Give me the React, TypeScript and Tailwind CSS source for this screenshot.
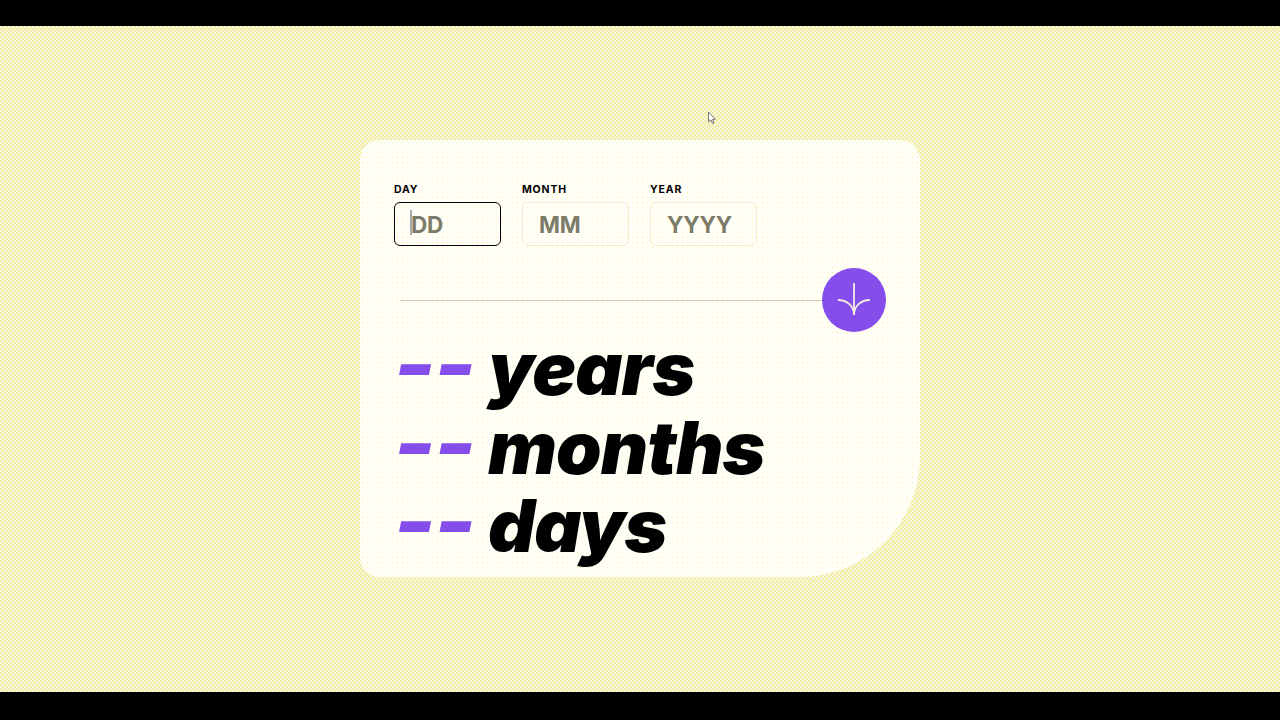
export default function App() {
  const fields = [
    { label: "DAY", placeholder: "DD", focused: true },
    { label: "MONTH", placeholder: "MM", focused: false },
    { label: "YEAR", placeholder: "YYYY", focused: false },
  ];
  const results = ["years", "months", "days"];

  return (
    <div className="relative flex h-[720px] flex-col bg-black pt-[26px] pb-[28px] font-['Inter',sans-serif]">
      <main className="flex flex-1 items-start justify-center pt-[114px] bg-[#f4f0bc] bg-[conic-gradient(#f3ed9f_25%,#f6f5de_0_50%,#f3ed9f_0_75%,#f6f5de_0)] bg-[length:4px_4px]">
        <div className="h-[437px] w-[560px] overflow-hidden rounded-t-[20px] rounded-bl-[20px] rounded-br-[120px] bg-[#fffff8] bg-[radial-gradient(#f9f5a4_0.6px,transparent_0.7px)] bg-[length:5px_5px] pt-[43px] pl-[34px] pr-[34px]">
          <div className="flex gap-[21px]">
            {fields.map((f) => (
              <label key={f.label} className="relative flex w-[107px] flex-col">
                <span className="mb-[5px] text-[10.5px] leading-[14px] font-bold tracking-[0.08em] text-black">
                  {f.label}
                </span>
                <input
                  placeholder={f.placeholder}
                  className={`h-[44px] w-full rounded-[6px] bg-transparent pl-[16px] text-[22.5px] font-bold tracking-[-0.01em] outline-none placeholder:text-[#7b7b68] ${
                    f.focused ? "border-[1.5px] border-black" : "border border-[#eeeed2]"
                  }`}
                />
                {f.focused && (
                  <span className="absolute left-[16px] top-[27px] h-[25px] w-[2px] bg-[#a9a9b0]" />
                )}
              </label>
            ))}
          </div>

          <div className="mt-[22px] flex items-center pl-[6px]">
            <div className="h-px flex-1 bg-[#cfcfb8]" />
            <button className="flex h-[64px] w-[64px] items-center justify-center rounded-full bg-[#854dea]">
              <svg width="64" height="64" viewBox="0 0 64 64" fill="none" stroke="#f1ebe4" strokeWidth="1.8">
                <path d="M32 15V47" />
                <path d="M16 32C25 32 32 38 32 47" />
                <path d="M48 32C39 32 32 38 32 47" />
              </svg>
            </button>
          </div>

          <div className="mt-[-2px] text-[73px] leading-[78.5px] font-black italic tracking-[-0.012em] text-black">
            {results.map((r) => (
              <div key={r} className="flex whitespace-nowrap">
                <span className="w-[94px] shrink-0 origin-left -translate-y-[4px] scale-x-[1.2] text-[#854dea]">--</span>
                <span>{r}</span>
              </div>
            ))}
          </div>
        </div>
      </main>

      <svg className="absolute left-[708px] top-[111px]" width="8" height="14" viewBox="0 0 8 14" fill="#fff" stroke="#555" strokeWidth="0.8">
        <path d="M0.5 1V11L3 8.8L4.6 12.4L6 11.8L4.5 8.3H7.4Z" />
      </svg>
    </div>
  );
}
